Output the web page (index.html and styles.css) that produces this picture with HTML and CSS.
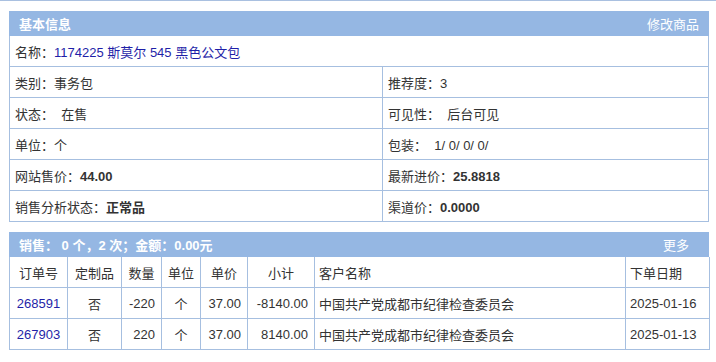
FILE: index.html
```html
<!DOCTYPE html>
<html lang="zh">
<head>
<meta charset="utf-8">
<title>商品信息</title>
<link rel="stylesheet" href="styles.css">
</head>
<body>
<div class="topline"></div>
<section class="panel">
  <div class="panel-head"><span class="title">基本信息</span><a class="action">修改商品</a></div>
  <table class="grid info">
    <colgroup><col class="c-left"><col></colgroup>
    <tr><td colspan="2">名称：<a class="link">1174225 斯莫尔 545 黑色公文包</a></td></tr>
    <tr><td>类别：事务包</td><td>推荐度：3</td></tr>
    <tr><td>状态：&nbsp; 在售</td><td>可见性：&nbsp; 后台可见</td></tr>
    <tr><td>单位：个</td><td>包装：&nbsp; 1/ 0/ 0/ 0/</td></tr>
    <tr><td>网站售价：<b>44.00</b></td><td>最新进价：<b>25.8818</b></td></tr>
    <tr><td>销售分析状态：<b>正常品</b></td><td>渠道价：<b>0.0000</b></td></tr>
  </table>
</section>
<section class="panel sales">
  <div class="panel-head wide"><span class="title">销售：&nbsp;0 个，2 次；金额：0.00元</span><a class="action">更多</a></div>
  <table class="grid orders">
    <colgroup>
      <col class="w58"><col class="w54"><col class="w40"><col class="w39"><col class="w47"><col class="w67"><col class="w311"><col class="w84">
    </colgroup>
    <tr class="head">
      <td>订单号</td><td>定制品</td><td>数量</td><td>单位</td><td>单价</td><td>小计</td><td class="l">客户名称</td><td class="l">下单日期</td>
    </tr>
    <tr>
      <td><a class="link">268591</a></td><td>否</td><td class="r">-220</td><td>个</td><td class="r">37.00</td><td class="r">-8140.00</td><td class="l">中国共产党成都市纪律检查委员会</td><td class="l">2025-01-16</td>
    </tr>
    <tr>
      <td><a class="link">267903</a></td><td>否</td><td class="r">220</td><td>个</td><td class="r">37.00</td><td class="r">8140.00</td><td class="l">中国共产党成都市纪律检查委员会</td><td class="l">2025-01-13</td>
    </tr>
  </table>
</section>
</body>
</html>
```

FILE: styles.css
```css
body {
  margin: 0;
  font: 13px "Liberation Sans", "Noto Sans CJK SC", sans-serif;
  color: #333;
  background: #fff;
}
.topline {
  height: 1px;
  background: #a9c0e0;
}
.panel {
  margin: 10px 0 0 9px;
  width: 700px;
}
.panel-head {
  height: 25px;
  background: #95b7e3;
  color: #fff;
  display: flex;
  justify-content: space-between;
  align-items: center;
  padding: 0 10px;
}
.panel-head.wide {
  padding-right: 20px;
}
.title {
  font-weight: bold;
}
.action {
  cursor: pointer;
}
.grid {
  width: 100%;
  border-collapse: collapse;
  table-layout: fixed;
}
.grid td {
  border: 1px solid #a6bfe0;
  height: 30px;
  padding: 0 5px;
  white-space: nowrap;
}
.grid tr:first-child td {
  border-top: none;
}
.c-left { width: 373px; }
.link { color: #1f1fa8; }
.grid b { font-weight: bold; color: #333; }
.orders td { text-align: center; padding: 0 4px; }
.orders td.r { text-align: right; padding-right: 6px; }
.orders td.l { text-align: left; padding-left: 4px; }
.w58 { width: 58px; }
.w54 { width: 54px; }
.w40 { width: 40px; }
.w39 { width: 39px; }
.w47 { width: 47px; }
.w67 { width: 67px; }
.w311 { width: 311px; }
.w84 { width: 84px; }
```
